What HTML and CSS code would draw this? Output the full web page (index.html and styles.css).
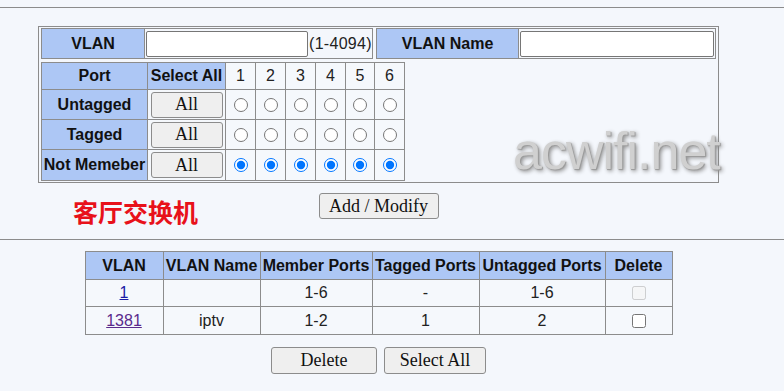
FILE: index.html
```html
<!DOCTYPE html>
<html lang="en">
<head>
  <meta charset="UTF-8" />
  <meta name="viewport" content="width=device-width, initial-scale=1.0"/>
  <title>802.1Q VLAN</title>
  <link rel="stylesheet" href="styles.css">
</head>
<body>
  <div class="rule"></div>

  <!-- VLAN edit form -->
  <div class="content">
    <div class="panel">
      <div class="panel-row">
        <div class="field field-id">
          <div class="head">VLAN</div>
          <div class="value"><input type="text" class="text-input id-input"><span class="hint">(1-4094)</span></div>
        </div>
        <div class="field field-name">
          <div class="head">VLAN Name</div>
          <div class="value"><input type="text" class="text-input name-input"></div>
        </div>
      </div>

      <div class="ports">
        <div class="head">Port</div>
        <div class="head">Select All</div>
        <div class="cell">1</div>
        <div class="cell">2</div>
        <div class="cell">3</div>
        <div class="cell">4</div>
        <div class="cell">5</div>
        <div class="cell">6</div>

        <div class="head">Untagged</div>
        <div class="cell"><button class="btn btn-all">All</button></div>
        <div class="cell"><input type="radio" name="p1"></div>
        <div class="cell"><input type="radio" name="p2"></div>
        <div class="cell"><input type="radio" name="p3"></div>
        <div class="cell"><input type="radio" name="p4"></div>
        <div class="cell"><input type="radio" name="p5"></div>
        <div class="cell"><input type="radio" name="p6"></div>

        <div class="head">Tagged</div>
        <div class="cell"><button class="btn btn-all">All</button></div>
        <div class="cell"><input type="radio" name="p1"></div>
        <div class="cell"><input type="radio" name="p2"></div>
        <div class="cell"><input type="radio" name="p3"></div>
        <div class="cell"><input type="radio" name="p4"></div>
        <div class="cell"><input type="radio" name="p5"></div>
        <div class="cell"><input type="radio" name="p6"></div>

        <div class="head">Not Memeber</div>
        <div class="cell"><button class="btn btn-all">All</button></div>
        <div class="cell"><input type="radio" name="p1" checked></div>
        <div class="cell"><input type="radio" name="p2" checked></div>
        <div class="cell"><input type="radio" name="p3" checked></div>
        <div class="cell"><input type="radio" name="p4" checked></div>
        <div class="cell"><input type="radio" name="p5" checked></div>
        <div class="cell"><input type="radio" name="p6" checked></div>
      </div>
    </div>

    <div class="actions">
      <span class="note">客厅交换机</span>
      <button class="btn btn-add">Add / Modify</button>
    </div>
  </div>

  <div class="rule"></div>

  <!-- VLAN list -->
  <div class="content">
    <div class="list">
      <div class="head">VLAN</div>
      <div class="head">VLAN Name</div>
      <div class="head">Member Ports</div>
      <div class="head">Tagged Ports</div>
      <div class="head">Untagged Ports</div>
      <div class="head">Delete</div>

      <div class="cell"><a href="#">1</a></div>
      <div class="cell"></div>
      <div class="cell">1-6</div>
      <div class="cell">-</div>
      <div class="cell">1-6</div>
      <div class="cell"><input type="checkbox" disabled></div>

      <div class="cell"><a href="#" class="visited">1381</a></div>
      <div class="cell">iptv</div>
      <div class="cell">1-2</div>
      <div class="cell">1</div>
      <div class="cell">2</div>
      <div class="cell"><input type="checkbox"></div>
    </div>

    <div class="list-actions">
      <button class="btn btn-delete">Delete</button>
      <button class="btn btn-select">Select All</button>
    </div>
  </div>

  <div class="watermark">acwifi.net</div>
</body>
</html>
```

FILE: styles.css
```css
body {
  margin: 0;
  padding-top: 7px;
  background-color: #f4f7fc;
  color: #222;
  font-family: "Liberation Sans", Arial, sans-serif;
  font-size: 16px;
}

.rule {
  border-top: 1px solid #8c8c8c;
}

.content {
  position: relative;
  width: 681px;
  margin-left: 38px;
}

.panel {
  margin-top: 18px;
  padding: 1px 2px;
  border: 1px solid #8c8c8c;
}

.panel-row {
  display: flex;
  gap: 3px;
  height: 31px;
}

.field {
  display: flex;
  box-sizing: border-box;
  border: 1px solid #8c8c8c;
}

.field-id {
  width: 332px;
}

.field-name {
  width: 340px;
}

.head {
  display: flex;
  align-items: center;
  justify-content: center;
  background-color: #adc7f5;
  color: #111;
  font-weight: bold;
  white-space: nowrap;
}

.field .head {
  flex-shrink: 0;
  border-right: 1px solid #8c8c8c;
}

.field-id .head {
  width: 102px;
}

.field-name .head {
  width: 141px;
}

.value {
  flex: 1;
  display: flex;
  align-items: center;
  white-space: nowrap;
}

.text-input {
  flex-shrink: 0;
  box-sizing: border-box;
  height: 26px;
  margin: 0 0 0 1px;
  padding: 1px 2px;
  border: 1px solid #767676;
  border-radius: 2px;
  background-color: #fff;
  font: inherit;
}

.id-input {
  width: 162px;
}

.name-input {
  width: 194px;
}

.hint {
  margin-left: 1px;
  letter-spacing: 0.3px;
}

.ports {
  display: grid;
  grid-template-columns: 105px 77px 29px 29px 29px 29px 28px 29px;
  grid-template-rows: 26px 29px 29px 30px;
  gap: 1px;
  width: max-content;
  margin-top: 3px;
  border: 1px solid #8c8c8c;
  background-color: #8c8c8c;
}

.cell {
  display: flex;
  align-items: center;
  justify-content: center;
  background-color: #f5f8fc;
  white-space: nowrap;
}

.ports input[type="radio"] {
  width: 14px;
  height: 14px;
  margin: 0;
}

.btn {
  box-sizing: border-box;
  padding: 0;
  border: 1px solid #8c8c8c;
  border-radius: 3px;
  background-color: #efefef;
  color: #111;
  font-family: "Liberation Serif", "Times New Roman", serif;
  font-size: 18px;
  cursor: pointer;
}

.btn-all {
  width: 72px;
  height: 26px;
}

.actions {
  position: relative;
  padding: 10px 0 20px;
}

.btn-add {
  display: block;
  width: 120px;
  height: 26px;
  margin: 0 auto;
}

.note {
  position: absolute;
  left: 35px;
  top: 16px;
  color: #e8111a;
  font-family: "Noto Sans CJK SC", sans-serif;
  font-size: 25px;
  font-weight: bold;
  line-height: 25px;
}

.list {
  display: grid;
  grid-template-columns: 77px 96px 111px 106px 125px 66px;
  grid-template-rows: 27px 26px 27px;
  gap: 1px;
  width: max-content;
  margin: 11px auto 0;
  border: 1px solid #8c8c8c;
  background-color: #8c8c8c;
}

.list a {
  color: #1a1aa6;
}

.list a.visited {
  color: #5a2a8c;
}

.list input[type="checkbox"] {
  width: 14px;
  height: 14px;
  margin: 0;
}

.list-actions {
  display: flex;
  justify-content: center;
  gap: 7px;
  margin-top: 12px;
}

.btn-delete {
  width: 106px;
  height: 27px;
}

.btn-select {
  width: 102px;
  height: 27px;
}

.watermark {
  position: absolute;
  left: 513px;
  top: 125px;
  color: #d0d0d0;
  font-family: "Liberation Sans", Arial, sans-serif;
  font-size: 52px;
  line-height: 52px;
  letter-spacing: -1px;
  text-shadow: 1px 1px 1px #9a9a9a, 2px 2px 4px #888;
}
```
